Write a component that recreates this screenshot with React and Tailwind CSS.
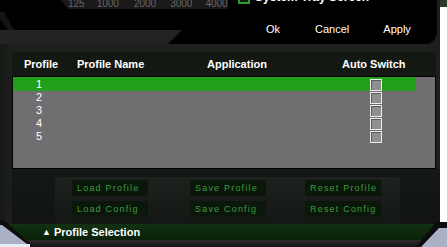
import React from "react";

const rows = [1, 2, 3, 4, 5];

function Check() {
  return (
    <div className="w-[12px] h-[12px] border border-[#ececec] bg-[#908e90] shadow-[inset_1px_1px_0_#5c5a5c]" />
  );
}

function Btn({ children }) {
  return (
    <div className="w-[76px] h-[16px] bg-[#0c170c] flex items-center pl-[5px] text-[9px] leading-none tracking-[1.2px] text-[#3c9c3c]">
      {children}
    </div>
  );
}

export default function App() {
  return (
    <div className="relative w-[447px] h-[247px] overflow-hidden bg-[#1b1f1b] flex font-['Liberation_Sans',Arial,sans-serif]">
      {/* left column */}
      <div className="w-[440px] h-full flex flex-col">
        {/* top black panel */}
        <div className="relative w-[437px] h-[44px] shrink-0 bg-black rounded-br-[12px] overflow-hidden">
          <div className="absolute left-0 top-[30px] w-[190px] h-[14px] bg-[#222322] [clip-path:polygon(0_0,182px_0,168px_100%,0_100%)]" />
          <div className="absolute left-0 top-[12px] w-[14px] h-[18px] bg-[#141414] [clip-path:polygon(0_0,4px_0,14px_100%,8px_100%,0_40%)]" />
          <div className="relative flex h-[10px] items-start">
            <div className="ml-[60px] w-[168px] h-[10px] bg-[#191919] [clip-path:polygon(0_0,100%_0,100%_100%,8px_100%)] flex text-[10px] leading-[10px] -mt-[1px] text-[#666666]">
              <span className="ml-[8px]">125</span>
              <span className="ml-[12px]">1000</span>
              <span className="ml-[15px]">2000</span>
              <span className="ml-[14px]">3000</span>
              <span className="ml-[13px]">4000</span>
            </div>
            <div className="ml-[10px] -mt-[8px] w-[12px] h-[12px] bg-[#2f9a2f] p-[2px]">
              <div className="w-full h-full bg-[#0a200a]" />
            </div>
            <div className="ml-[5px] -mt-[9px] text-[12px] leading-[12px] font-bold text-white">
              System Tray Screen
            </div>
          </div>
          <div className="relative flex mt-[12px] h-[14px] items-center text-[11px] leading-[14px] text-white">
            <span className="ml-[266px]">Ok</span>
            <span className="ml-[35px]">Cancel</span>
            <span className="ml-[34px]">Apply</span>
          </div>
        </div>

        {/* main panel */}
        <div className="flex-1 flex">
          <div className="w-[12px] h-full bg-gradient-to-r from-[#161816] to-[#1c1f1c]" />
          <div className="w-[428px] h-full flex flex-col bg-[#1c211c]">
            <div className="h-[8px] shrink-0" />
            {/* header */}
            <div className="w-[424px] h-[24px] shrink-0 bg-[#131813] flex items-center text-[11px] font-bold text-white leading-none">
              <span className="w-[65px] pl-[12px]">Profile</span>
              <span className="w-[130px]">Profile Name</span>
              <span className="w-[135px]">Application</span>
              <span>Auto Switch</span>
            </div>
            {/* list */}
            <div className="w-[424px] h-[93px] shrink-0 border border-black bg-[#706e70]">
              {rows.map((n) => (
                <div
                  key={n}
                  className={
                    n === 1
                      ? "w-[403px] h-[14px] pt-[1px] flex items-center bg-[#23a01b] text-[11px] text-white leading-none"
                      : "w-[403px] h-[13px] flex items-center text-[11px] text-white leading-none"
                  }
                >
                  <span className="pl-[23px] w-[357px]">{n}</span>
                  <Check />
                </div>
              ))}
            </div>
            {/* buttons region */}
            <div className="h-[55px] shrink-0 bg-gradient-to-b from-[#141814] to-[#111411] pt-[8px]">
              <div className="ml-[43px] w-[345px] h-[47px] rounded-t-[4px] bg-gradient-to-b from-[#1e221e] to-[#141714] pt-[3px] pl-[17px] flex">
                <div className="flex flex-col gap-[5px]">
                  <Btn>Load Profile</Btn>
                  <Btn>Load Config</Btn>
                </div>
                <div className="flex flex-col gap-[5px] ml-[42px]">
                  <Btn>Save Profile</Btn>
                  <Btn>Save Config</Btn>
                </div>
                <div className="flex flex-col gap-[5px] ml-[39px]">
                  <Btn>Reset Profile</Btn>
                  <Btn>Reset Config</Btn>
                </div>
              </div>
            </div>
          </div>
        </div>
      </div>

      {/* right strip */}
      <div className="w-[7px] h-full flex flex-col">
        <div className="h-[7px] bg-[#2b3a2b]" />
        <div className="flex-1 bg-white" />
      </div>

      {/* bottom band (overlay across full width) */}
      <div className="absolute left-0 top-[224px] w-[440px] h-[16px] bg-gradient-to-b from-[#123212] to-[#0a200a] flex items-center text-[11px] font-bold text-white leading-none">
        <span className="ml-[42px] text-[9px]">▲</span>
        <span className="ml-[3px]">Profile Selection</span>
      </div>
      <div className="absolute left-0 top-[240px] w-[440px] h-[7px] bg-gradient-to-b from-[#2a2c2a] to-[#161616]" />

      {/* bottom-left corner decoration */}
      <div className="absolute left-0 top-[220px] w-[34px] h-[27px] bg-[#0e0e0e] [clip-path:polygon(0_0,4px_0,34px_100%,0_100%)]" />
      <div className="absolute left-0 top-[225px] w-[30px] h-[22px] bg-[#aab1c7] [clip-path:polygon(0_0,2px_0,28px_90%,28px_100%,0_100%)]" />
      <div className="absolute left-0 top-[244px] w-[30px] h-[3px] bg-[#e8ecf4]" />

      {/* bottom-right corner decoration */}
      <div className="absolute left-[416px] top-[222px] w-[31px] h-[25px] bg-[#0c0c0c] [clip-path:polygon(20px_0,100%_0,100%_100%,0_100%)]" />
      <div className="absolute left-[421px] top-[228px] w-[26px] h-[19px] bg-[#aab1c7] [clip-path:polygon(18px_0,100%_0,100%_100%,0_100%)]" />
    </div>
  );
}
